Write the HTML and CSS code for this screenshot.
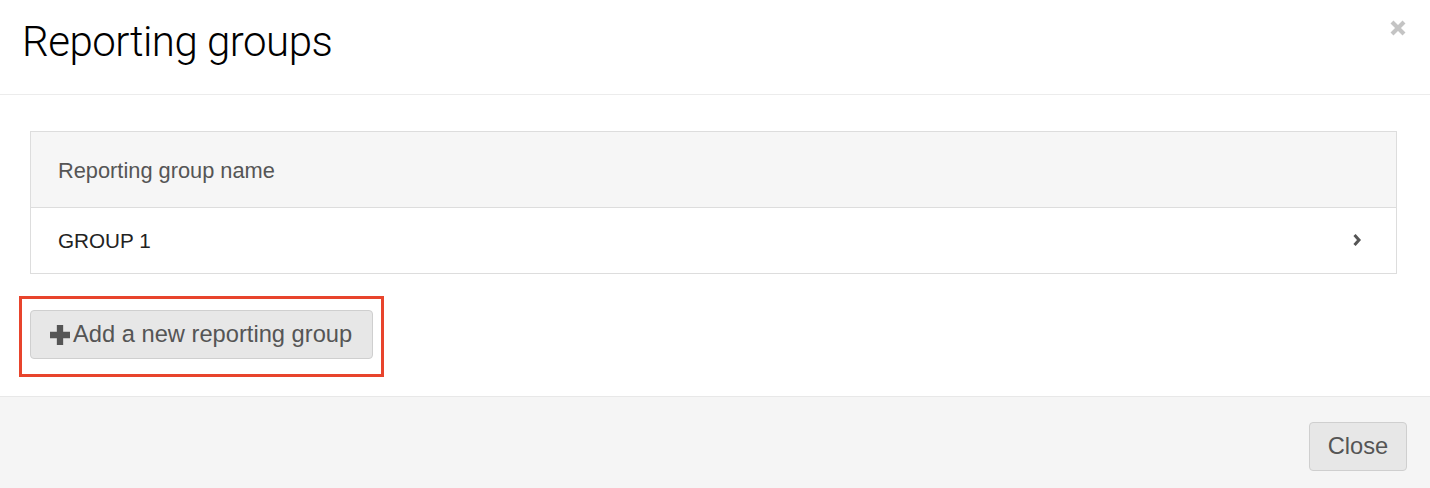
FILE: index.html
```html
<!DOCTYPE html>
<html>
<head>
<meta charset="utf-8">
<link rel="stylesheet" href="styles.css">
</head>
<body>
<div class="modal">
  <div class="modal-header">
    <h1 class="modal-title">Reporting groups</h1>
    <button class="close-x" aria-label="Close">
      <svg width="16" height="16" viewBox="0 0 16 16"><path d="M2 2 L14 14 M14 2 L2 14" stroke="#c4c4c4" stroke-width="4.2" stroke-linecap="butt"/></svg>
    </button>
  </div>
  <div class="modal-body">
    <div class="table">
      <div class="table-head">Reporting group name</div>
      <div class="table-row">
        <span class="row-name">GROUP 1</span>
        <svg class="chevron" width="10" height="14" viewBox="0 0 10 14"><path d="M2.5 2 L7 7 L2.5 12" fill="none" stroke="#555" stroke-width="3"/></svg>
      </div>
    </div>
    <div class="highlight">
      <button class="btn btn-add">
        <svg class="plus" width="20" height="20" viewBox="0 0 19 19"><path d="M6.5 0 H12.5 V6.5 H19 V12.5 H12.5 V19 H6.5 V12.5 H0 V6.5 H6.5 Z" fill="#555"/></svg>
        <span>Add a new reporting group</span>
      </button>
    </div>
  </div>
  <div class="modal-footer">
    <button class="btn btn-close">Close</button>
  </div>
</div>
</body>
</html>
```

FILE: styles.css
```css
* { box-sizing: border-box; }
html, body { margin: 0; padding: 0; background: #fff; }
body { font-family: "Liberation Sans", Arial, sans-serif; color: #333; width: 1430px; height: 488px; overflow: hidden; }

.modal { display: flex; flex-direction: column; height: 488px; }

.modal-header {
  height: 95px;
  border-bottom: 1px solid #ececec;
  display: flex;
  justify-content: space-between;
  align-items: flex-start;
  padding: 0 24px 0 22px;
}
.modal-title {
  margin: 0;
  padding-top: 17px;
  font-family: "Roboto", "Liberation Sans", sans-serif;
  font-weight: 300;
  font-size: 42px;
  line-height: 50px;
  color: #000;
  letter-spacing: -0.5px;
}
.close-x {
  margin-top: 20px;
  padding: 0;
  border: 0;
  background: none;
  width: 16px;
  height: 16px;
  display: block;
}
.close-x svg { display: block; }

.modal-body {
  padding: 36px 33px 0 30px;
  height: 302px;
  border-bottom: 1px solid #e8e8e8;
}
.table { border: 1px solid #dddddd; }
.table-head {
  height: 76px;
  background: #f6f6f6;
  border-bottom: 1px solid #dddddd;
  padding-left: 27px;
  padding-top: 2px;
  display: flex;
  align-items: center;
  font-size: 21.8px;
  color: #555;
}
.table-row {
  height: 65px;
  display: flex;
  align-items: center;
  justify-content: space-between;
  padding: 0 34px 0 27px;
  font-size: 20.7px;
  color: #222;
}
.chevron { display: block; margin-top: -2px; }

.highlight {
  display: inline-block;
  margin-top: 22px;
  margin-left: -11px;
  border: 3px solid #e8442c;
  padding: 11px 8px 15px 8px;
}
.btn {
  font-family: "Liberation Sans", Arial, sans-serif;
  background: #e7e7e7;
  border: 1px solid #cfcfcf;
  border-radius: 4px;
  color: #555;
  font-size: 23.7px;
  height: 49px;
  display: flex;
  align-items: center;
  padding: 0;
  cursor: pointer;
}
.btn-add {
  width: 343px;
  padding-left: 19px;
  gap: 3px;
}
.plus { display: block; flex: none; }

.modal-footer {
  flex: 1;
  background: #f5f5f5;
  display: flex;
  justify-content: flex-end;
  align-items: flex-start;
  padding: 25px 23px 0 0;
}
.btn-close {
  width: 98px;
  justify-content: center;
}
```
